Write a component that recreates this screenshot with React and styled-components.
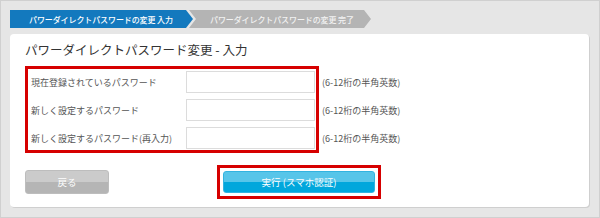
import React from 'react'
import styled, { createGlobalStyle } from 'styled-components'

const GlobalStyle = createGlobalStyle`
  html, body {
    margin: 0;
    padding: 0;
    background: #fff;
  }
  body {
    font-family: "Noto Sans CJK JP", "Noto Sans", sans-serif;
  }
`

const Frame = styled.div`
  box-sizing: border-box;
  width: 600px;
  height: 218px;
  border: 1px solid #d0d0d0;
  background: #e6e6e6;
  padding: 9px 10px 0 9px;
`

const Steps = styled.div`
  display: flex;
  height: 18px;
`

const Step = styled.div`
  display: flex;
  align-items: center;
  box-sizing: border-box;
  flex: 0 0 ${(p) => p.$width}px;
  height: 18px;
  margin-left: ${(p) => (p.$first ? 0 : -4)}px;
  padding-left: ${(p) => (p.$first ? 19 : 21)}px;
  background: ${(p) => (p.$active ? '#1379be' : '#b4b4b4')};
  color: ${(p) => (p.$active ? '#fff' : '#f2f2f2')};
  font-size: 8px;
  letter-spacing: -0.1px;
  font-weight: 500;
  white-space: nowrap;
  overflow: hidden;
  clip-path: ${(p) =>
    p.$first
      ? 'polygon(0 0, calc(100% - 7px) 0, 100% 50%, calc(100% - 7px) 100%, 0 100%)'
      : 'polygon(0 0, calc(100% - 7px) 0, 100% 50%, calc(100% - 7px) 100%, 0 100%, 7px 50%)'};
`

const Card = styled.div`
  margin-top: 6px;
  background: #fff;
  border-radius: 4px;
  box-shadow: 1px 1px 0 #cfcfcf;
  padding: 8px 15px 8px 15px;
`

const Title = styled.h1`
  margin: 0;
  font-size: 12.5px;
  line-height: 16px;
  font-weight: 400;
  color: #333;
`

const Highlight = styled.div`
  box-sizing: border-box;
  width: 294px;
  margin-top: 8px;
  border: 3px solid #d60000;
  padding: 2px 0 1px 3px;
  display: flex;
  flex-direction: column;
  gap: 6px;
`

const Row = styled.div`
  display: flex;
  align-items: center;
  height: 22px;
`

const Label = styled.div`
  flex: 0 0 155px;
  font-size: 9px;
  color: #555;
  white-space: nowrap;
`

const Input = styled.input`
  flex: 0 0 auto;
  box-sizing: border-box;
  width: 129px;
  min-width: 0;
  height: 22px;
  padding: 0;
  border: 1px solid #dcdcdc;
  background: #fff;
  margin: 0;
`

const Hint = styled.div`
  flex: 0 0 auto;
  margin-left: 7px;
  font-size: 9px;
  color: #555;
  white-space: nowrap;
`

const Actions = styled.div`
  display: flex;
  align-items: center;
  margin-top: 12px;
`

const Button = styled.button`
  box-sizing: border-box;
  width: ${(p) => p.$width}px;
  height: ${(p) => p.$height}px;
  margin: 0;
  padding: 0;
  border: 1px solid ${(p) => (p.$primary ? '#32b3e0' : '#bdbdbd')};
  border-radius: 3px;
  background: ${(p) =>
    p.$primary
      ? 'linear-gradient(#57c5e9 0%, #57c5e9 50%, #01a7dc 50%, #01a7dc 100%)'
      : 'linear-gradient(#cbcbcb 0%, #cbcbcb 50%, #b5b5b5 50%, #b5b5b5 100%)'};
  color: #fff;
  font-family: inherit;
  font-size: 9.5px;
  text-align: center;
`

const PrimaryFrame = styled.div`
  margin-left: 108px;
  border: 3px solid #d60000;
  padding: 3px;
  display: flex;
`

const rows = [
  '現在登録されているパスワード',
  '新しく設定するパスワード',
  '新しく設定するパスワード(再入力)',
]

export default function App() {
  return (
    <>
      <GlobalStyle />
      <Frame>
        <Steps>
          <Step $first $active $width={183}>
            パワーダイレクトパスワードの変更 入力
          </Step>
          <Step $width={182}>パワーダイレクトパスワードの変更 完了</Step>
        </Steps>
        <Card>
          <Title>パワーダイレクトパスワード変更 - 入力</Title>
          <Highlight>
            {rows.map((label) => (
              <Row key={label}>
                <Label>{label}</Label>
                <Input type="password" />
                <Hint>(6-12桁の半角英数)</Hint>
              </Row>
            ))}
          </Highlight>
          <Actions>
            <Button $width={84} $height={24}>
              戻る
            </Button>
            <PrimaryFrame>
              <Button $primary $width={152} $height={22}>
                実行 (スマホ認証)
              </Button>
            </PrimaryFrame>
          </Actions>
        </Card>
      </Frame>
    </>
  )
}
